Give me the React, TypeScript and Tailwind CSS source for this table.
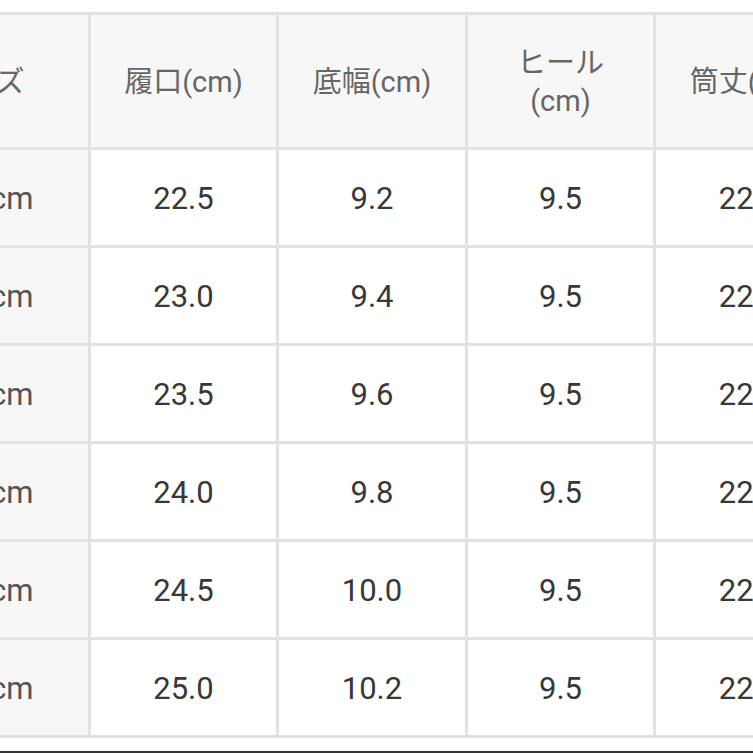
const header = ["サイズ", "履口(cm)", "底幅(cm)", "ヒール\n(cm)", "筒丈(cm)"];

const rows = [
  ["22.5cm", "22.5", "9.2", "9.5", "22.0"],
  ["23.0cm", "23.0", "9.4", "9.5", "22.0"],
  ["23.5cm", "23.5", "9.6", "9.5", "22.0"],
  ["24.0cm", "24.0", "9.8", "9.5", "22.0"],
  ["24.5cm", "24.5", "10.0", "9.5", "22.0"],
  ["25.0cm", "25.0", "10.2", "9.5", "22.0"],
];

export default function App() {
  return (
    <div className="relative w-[753px] h-[753px] overflow-hidden bg-white font-['Roboto','Noto_Sans_CJK_JP',sans-serif]">
      <div className="mt-[12px] ml-[-128px] w-max grid grid-cols-[213px_185px_186px_185px_186px] grid-rows-[132px_repeat(6,95px)] gap-[3px] p-[3px] bg-[#e2e2e2]">
        {header.map((h, i) => (
          <div
            key={i}
            className="flex items-center justify-center pt-[2px] text-center whitespace-pre-line bg-[#f7f7f7] text-[#666] text-[29px] leading-[38px]"
          >
            {h}
          </div>
        ))}
        {rows.map((r, ri) =>
          r.map((c, ci) => (
            <div
              key={ri + "-" + ci}
              className={
                "flex items-center justify-center pt-[4px] text-[31px] " +
                (ci === 0 ? "bg-[#f7f7f7] text-[#555]" : "bg-white text-[#383838]")
              }
            >
              {c}
            </div>
          ))
        )}
      </div>
      <div className="absolute left-0 right-0 bottom-0 h-[2px] bg-[#333]" />
    </div>
  );
}
